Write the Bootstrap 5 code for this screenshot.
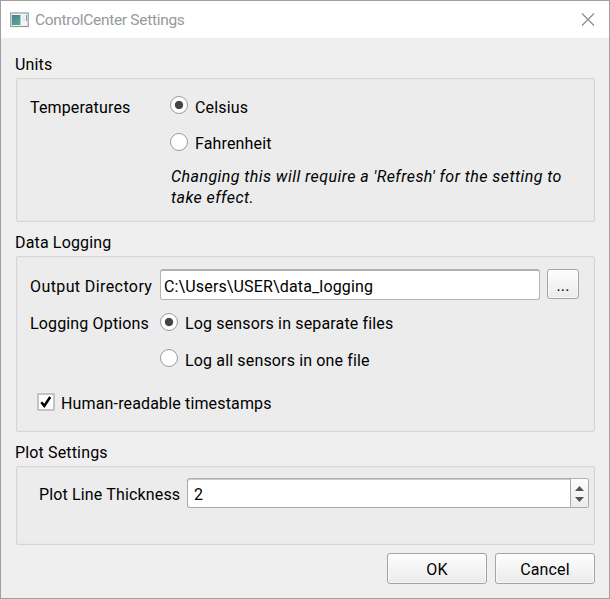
<!DOCTYPE html>
<html lang="en">
<head>
<meta charset="utf-8">
<meta name="viewport" content="width=device-width, initial-scale=1">
<title>ControlCenter Settings</title>
<link href="https://cdn.jsdelivr.net/npm/bootstrap@5.3.0/dist/css/bootstrap.min.css" rel="stylesheet">
<style>
body{font:16px/21px Roboto,"Liberation Sans",sans-serif;color:#000;letter-spacing:.15px;background:#efefef}
.dialog{width:610px;height:599px;border:1px solid #a0a0a0;background:#efefef;overflow:hidden}
.titlebar{height:37px;padding:0 14px 0 9px;background:#fff;color:#999}
.titlebar .caption{margin:1px 0 0 5px;font-size:15.5px;letter-spacing:-.3px}
.dialog-main{padding:0 14px}
.group-title{height:24px;white-space:nowrap}
.group-title.first{margin-top:16px}
.group-title.next{margin-top:10px}
.panel{margin-left:1px;border:1px solid #d5d5d5;border-radius:2px;background:#ececec;box-shadow:inset 0 0 0 1px #e8e8e8;white-space:nowrap}
.units-panel{height:144px;padding:18px 13px 0}
.log-panel{height:176px;padding:12px 15px 0 13px}
.plot-panel{height:79px;padding:11px 5px 0 22px}
.units-label{width:140px}
.log-label{width:130px}
.plot-label{width:148px;padding-top:6px}
.out-label{padding-top:7px;letter-spacing:.4px}
.form-check.choice{margin:0;padding:0;min-height:0;height:21px;display:flex}
.choice .form-check-input{float:none;flex:none;width:18px;height:18px;margin:-1px 7px 0 0;border:1px solid #9c9c9c;background-color:#fff;box-shadow:none;opacity:1}
.choice .form-check-input[type=radio]:checked{background:radial-gradient(circle at center,#444 0 3.7px,#fff 4.6px)}
.choice .form-check-input[type=checkbox]{margin:0 6px 0 0;border:2px solid #c4c4c4;border-radius:1px}
.choice .form-check-input[type=checkbox]:checked{background:#fff url("data:image/svg+xml,%3Csvg xmlns='http://www.w3.org/2000/svg' viewBox='0 0 14 14'%3E%3Cpath d='M2.3 7.2l3 3.7L11.2 2' fill='none' stroke='%23000' stroke-width='2.5'/%3E%3C/svg%3E") center/14px no-repeat}
.gap-choice{margin-top:15px!important}
.options .gap-choice{margin-top:16px!important}
.units-panel .gap-choice .form-check-input{margin-top:0}
.options{margin-top:13px}
.options .form-check-input{margin-top:0}
.options .gap-choice .form-check-input{margin-top:-1px}
.form-check.stamp{margin:22px 0 0 7px}
.hint{width:410px;margin:12px 0 0 1px;font-style:italic;letter-spacing:.44px}
.form-control.field{height:31px;padding:3px 3px 0;border:1px solid #b4b4b4;border-top:2px solid #b0b0b0;border-radius:3px;font:inherit;letter-spacing:inherit;color:#000;background:#fff;box-shadow:none}
.btn.push{height:31px;padding:2px 0 0;border:1px solid #a3a3a3;border-radius:3px;background:linear-gradient(#fdfdfd,#ebebeb);box-shadow:inset 0 0 0 1px rgba(255,255,255,.6);font:inherit;letter-spacing:inherit;color:#000;width:100px}
.btn.push.browse{width:32px;height:30px;margin-left:7px}
.spin{width:403px;height:30px;border:1px solid #aaa;border-top-color:#b0b0b0;border-radius:3px;background:#fff;box-shadow:inset 0 1px #ccc;overflow:hidden}
.spin .value{padding:5px 0 0 6px}
.steps{width:18px;border-left:1px solid #a8a8a8;background:linear-gradient(#fdfdfd,#ececec)}
.steps svg{display:block}
</style>
<script src="https://cdn.jsdelivr.net/npm/bootstrap@5.3.0/dist/js/bootstrap.bundle.min.js"></script>
</head>
<body>
<div class="dialog">
  <header class="titlebar d-flex align-items-center">
    <svg width="20" height="16" viewBox="0 0 20 16"><defs><linearGradient id="scr" x1="0" y1="0" x2=".6" y2="1"><stop stop-color="#4877a8"/><stop offset="1" stop-color="#58ab82"/></linearGradient></defs><rect x=".75" y="1" width="17.5" height="13.5" fill="#f4f6f7" stroke="#929ca2" stroke-width="1.2"/><rect x="2" y="3" width="8.5" height="10" fill="url(#scr)"/><path d="M12 3.5h3v6h-3z" fill="#e8ecec"/><path d="M16.5 3v6" stroke="#6fa596"/></svg>
    <span class="caption">ControlCenter Settings</span>
    <svg class="ms-auto" width="14" height="14" viewBox="0 0 14 14"><path d="M1 .5l12 12M13 .5L1 12.500" stroke="#8a8a8a" stroke-width="1.1"/></svg>
  </header>
  <main class="dialog-main">
    <div class="group-title first">Units</div>
    <section class="panel units-panel d-flex">
      <div class="units-label flex-shrink-0">Temperatures</div>
      <div>
        <label class="form-check choice"><input class="form-check-input" type="radio" name="temp" checked><span>Celsius</span></label>
        <label class="form-check choice gap-choice"><input class="form-check-input" type="radio" name="temp"><span>Fahrenheit</span></label>
        <p class="hint">Changing this will require a 'Refresh' for the setting to<br>take effect.</p>
      </div>
    </section>
    <div class="group-title next">Data Logging</div>
    <section class="panel log-panel">
      <div class="d-flex">
        <div class="log-label out-label flex-shrink-0">Output Directory</div>
        <input class="form-control field flex-fill" value="C:\Users\USER\data_logging">
        <button class="btn push browse flex-shrink-0" type="button">...</button>
      </div>
      <div class="d-flex options">
        <div class="log-label flex-shrink-0">Logging Options</div>
        <div>
          <label class="form-check choice"><input class="form-check-input" type="radio" name="log" checked><span>Log sensors in separate files</span></label>
          <label class="form-check choice gap-choice"><input class="form-check-input" type="radio" name="log"><span>Log all sensors in one file</span></label>
        </div>
      </div>
      <label class="form-check choice stamp"><input class="form-check-input" type="checkbox" checked><span>Human-readable timestamps</span></label>
    </section>
    <div class="group-title next">Plot Settings</div>
    <section class="panel plot-panel d-flex">
      <div class="plot-label flex-shrink-0">Plot Line Thickness</div>
      <div class="spin d-flex">
        <div class="value flex-fill">2</div>
        <div class="steps"><svg width="17" height="28" viewBox="0 0 17 28"><path d="M4 12L8.500 7l4.500 5zM4 18h9l-4.500 5z" fill="#555"/></svg></div>
      </div>
    </section>
    <footer class="d-flex justify-content-end gap-2 mt-2">
      <button class="btn push" type="button">OK</button>
      <button class="btn push" type="button">Cancel</button>
    </footer>
  </main>
</div>
</body>
</html>
